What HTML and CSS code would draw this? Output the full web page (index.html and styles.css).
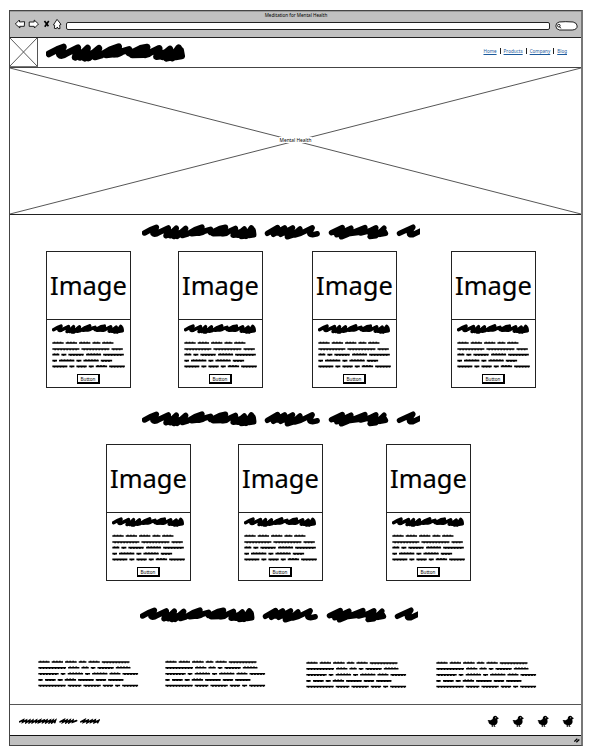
FILE: index.html
```html
<!DOCTYPE html>
<html lang="en">
<head>
<meta charset="utf-8">
<title>Meditation for Mental Health</title>
<link rel="stylesheet" href="styles.css">
</head>
<body>
<svg class="defs" aria-hidden="true">
  <symbol id="word" viewBox="138 128 415 56" preserveAspectRatio="none">
    <path class="brush" d="M147 160 L172 147 190 140 178 162 Q184 169 200 158 L233 142 225 170 L240 164 262 143 254 173 L272 164 296 144 284 169 L302 164 330 148 355 139 340 160 Q350 164 366 153 L386 147 Q380 164 396 156 L420 144 440 140 428 162 Q440 165 450 156 L476 144 468 168 L484 166 508 146 498 173 L514 170 534 142 525 169 L543 166 540 150"/>
    <path class="brush" d="M234 150 L240 170 258 155 265 172 290 153 M230 160H290 M470 158H540 M318 163L342 160 M396 163L430 162 M474 150 L486 168 506 155 515 172 530 155"/>
  </symbol>
  <symbol id="title" viewBox="36 42 834 46" preserveAspectRatio="none">
    <use href="#word" x="36" y="42" width="344" height="45"/>
    <path class="brush title-brush" d="M412 69 L443 52 430 72 464 53 452 72 488 53 472 79 L488 74 510 56 494 74 L512 69 547 53 540 66 Q536 73 547 73 L562 70 M428 68H510"/>
    <path class="brush title-brush" d="M604 67 L637 52 620 73 663 54 634 79 L658 70 L705 52 692 68 718 62 738 53 720 78 L738 76 762 54 750 72 767 69 M615 67H665 M655 70 L690 66 M718 66 L764 65"/>
    <path class="brush title-brush" d="M808 69 L849 51 838 67 Q836 75 848 73 L878 59"/>
  </symbol>
  <symbol id="copy" viewBox="35 287 220 84" preserveAspectRatio="none">
    <path class="ink" d="M36 293H70M76 293H110M116 293H150M156 293H180M185 293H219M36 311H117M123 311H207M213 311H247M36 328H57M63 328H78M84 328H130M137 328H182M188 328H250M36 346H50M56 346H102M108 346H123M129 346H175M181 346H215M36 363H81M87 363H102M108 363H139M145 363H160M166 363H200M206 363H253"/>
    <path class="wiggle" d="M40 291H67M80 291H107M120 291H148M160 291H178M189 291H216M42 313H114M129 313H204M217 313H245M40 326H55M67 330H76M89 330H127M141 326H180M193 330H247M40 348H48M61 344H99M112 348H121M134 344H172M185 348H212M40 365H78M91 365H100M112 365H136M149 365H158M170 361H197M211 365H250"/>
  </symbol>
  <symbol id="blurb" viewBox="114 29 301 82" preserveAspectRatio="none">
    <path class="ink" d="M115 35H149M155 35H189M195 35H230M236 35H259M265 35H299M305 35H388M115 52H198M204 52H238M244 52H266M272 52H286M292 52H341M347 52H391M115 70H176M182 70H196M203 70H249M255 70H270M276 70H322M328 70H361M367 70H414M115 88H128M135 88H167M173 88H188M194 88H228M234 88H281M287 88H318M324 88H370M115 105H197M203 105H244M250 105H302M308 105H339M345 105H360M366 105H414"/>
    <path class="wiggle" d="M119 33H147M159 33H187M199 33H227M240 33H257M269 33H296M310 37H385M119 54H195M208 50H235M248 50H263M276 54H284M297 54H337M351 50H388M120 72H173M186 72H194M208 68H246M259 72H268M281 68H319M332 68H358M372 72H411M119 90H126M139 90H164M177 90H186M199 86H225M239 90H278M291 90H315M329 90H367M119 107H194M208 107H241M255 107H298M312 107H336M349 107H358M371 107H411"/>
  </symbol>
  <symbol id="bird" viewBox="0 0 36 36">
    <path d="M1 15 L11 16 17 12 Q17 3 25 2 Q30 2 31 7 L36 10 31 13 Q34 28 23 31 L24 34 27 35 21 35 20 31 17 31 18 34 20 35 14 35 14 30 Q6 28 4 22 L6 21 2 18 4 17Z"/>
    <circle cx="26" cy="8" r="1.6" fill="#fff"/>
  </symbol>
</svg>

<div class="window">
  <div class="chrome">
    <div class="window-title">Meditation for Mental Health</div>
    <div class="toolbar">
      <svg class="controls" viewBox="45 54 142 36">
        <path class="outline" d="M46 72 L58 60 59 66 74 65 73 79 59 79 60 84Z M88 66 L103 66 103 60 116 72 104 84 103 79 88 79Z M161 75 L172 58 184 73 180 75 181 86 175 86 173 81 170 86 164 85 165 76Z"/>
        <path class="cross" d="M134 63 L146 79 M147 63 L135 80"/>
      </svg>
      <div class="address"></div>
      <svg class="search" viewBox="0 0 68 30">
        <path class="outline" d="M12 3 Q30 1 54 3 Q66 6 66 15 Q66 26 51 27 L13 27 Q2 25 2 15 Q2 5 12 3Z"/>
        <circle cx="11" cy="14" r="4" fill="none" stroke="#000" stroke-width="2.5"/>
        <path d="M13 17 L17 22" stroke="#000" stroke-width="3"/>
      </svg>
    </div>
  </div>

  <header class="header">
    <svg class="logo" viewBox="0 0 28 29" preserveAspectRatio="none"><path d="M0 0 L28 29 M28 0 L0 29"/></svg>
    <svg class="brand"><use href="#word"/></svg>
    <nav class="nav"><a href="#">Home</a><a href="#">Products</a><a href="#">Company</a><a href="#">Blog</a></nav>
  </header>

  <section class="hero">
    <svg class="hero-cross" viewBox="0 0 572 146" preserveAspectRatio="none"><path d="M0 0 L572 146 M572 0 L0 146"/></svg>
    <span class="hero-label">Mental Health</span>
  </section>

  <main class="main">
    <svg class="title"><use href="#title"/></svg>
    <div class="cards cards-four">
      <article class="card"><div class="picture">Image</div><svg class="card-title"><use href="#word"/></svg><svg class="card-copy"><use href="#copy"/></svg><button class="button">Button</button></article>
      <article class="card"><div class="picture">Image</div><svg class="card-title"><use href="#word"/></svg><svg class="card-copy"><use href="#copy"/></svg><button class="button">Button</button></article>
      <article class="card"><div class="picture">Image</div><svg class="card-title"><use href="#word"/></svg><svg class="card-copy"><use href="#copy"/></svg><button class="button">Button</button></article>
      <article class="card"><div class="picture">Image</div><svg class="card-title"><use href="#word"/></svg><svg class="card-copy"><use href="#copy"/></svg><button class="button">Button</button></article>
    </div>
    <svg class="title title-second"><use href="#title"/></svg>
    <div class="cards cards-three">
      <article class="card"><div class="picture">Image</div><svg class="card-title"><use href="#word"/></svg><svg class="card-copy"><use href="#copy"/></svg><button class="button">Button</button></article>
      <article class="card"><div class="picture">Image</div><svg class="card-title"><use href="#word"/></svg><svg class="card-copy"><use href="#copy"/></svg><button class="button">Button</button></article>
      <article class="card"><div class="picture">Image</div><svg class="card-title"><use href="#word"/></svg><svg class="card-copy"><use href="#copy"/></svg><button class="button">Button</button></article>
    </div>
    <svg class="title title-third"><use href="#title"/></svg>
    <div class="blurbs">
      <svg class="blurb"><use href="#blurb"/></svg>
      <svg class="blurb"><use href="#blurb"/></svg>
      <svg class="blurb"><use href="#blurb"/></svg>
      <svg class="blurb"><use href="#blurb"/></svg>
    </div>
  </main>

  <footer class="footer">
    <svg class="legal" viewBox="56 205 242 16" preserveAspectRatio="none">
      <path d="M58 215 L69 210 67 216 78 211 77 217 88 211 87 217 97 211 96 217 108 211 107 216 119 211 116 216 130 211 128 216 139 211 137 217 149 211 147 217 157 211 155 217 165 211 163 217 M78 214H163 M179 215 L190 210 187 216 199 211 197 217 208 211 206 217 217 211 216 216 228 212 M187 214H218 M241 215 L252 210 249 216 262 211 260 217 273 211 271 216 283 211 281 217 294 212 291 217 M250 214H292"/>
    </svg>
    <div class="social">
      <svg><use href="#bird"/></svg><svg><use href="#bird"/></svg><svg><use href="#bird"/></svg><svg><use href="#bird"/></svg>
    </div>
  </footer>
  <div class="status"><svg class="grip" viewBox="0 0 18 14"><path d="M1 10 L10 2 M7 12 L16 4"/></svg></div>
</div>
</body>
</html>
```
FILE: styles.css
```css
* { box-sizing: border-box; }
body { margin: 0; background: #fff; color: #000; font-family: "Noto Sans", sans-serif; font-size: 4.8px; line-height: 6px; }
svg { display: block; flex: none; }
.defs { position: absolute; width: 0; height: 0; }

.brush { fill: none; stroke: #000; stroke-width: 20; stroke-linecap: round; stroke-linejoin: round; }
.title-brush { stroke-width: 15.5; }
.ink { fill: none; stroke: #000; stroke-width: 5; }
.wiggle { fill: none; stroke: #000; stroke-width: 3; stroke-dasharray: 5 4; }
.outline { fill: #fff; stroke: #000; stroke-width: 2.6; stroke-linejoin: round; }
.cross { fill: none; stroke: #000; stroke-width: 5; }

.window { display: flex; flex-direction: column; width: 574px; height: 736px; margin: 10px 0 0 9px; border: 1px solid #444; border-right: 2px solid #777; }
.chrome { height: 27px; background: #c0c0c0; border-top: 1px solid #999; border-bottom: 1px solid #222; }
.window-title { height: 8px; padding-left: 1px; text-align: center; font-size: 4.6px; }
.toolbar { display: flex; align-items: flex-start; padding: 0 3px 0 5px; }
.controls { width: 47px; height: 12px; margin-top: -2px; }
.address { flex: 1; height: 8px; margin: 2px 5px 0 4px; background: #fff; border: 1px solid #222; border-radius: 2px; }
.search { width: 23px; height: 10px; margin-top: 1px; }

.header { display: flex; align-items: center; height: 30px; border-bottom: 1px solid #444; }
.logo { width: 28px; height: 29px; border-right: 1px solid #555; border-bottom: 1px solid #777; }
.logo path, .hero-cross path { fill: none; stroke: #555; stroke-width: 1; }
.brand { width: 139px; height: 19px; margin-left: 8px; }
.nav { display: flex; margin-left: auto; padding: 0 14px 3px 0; font-size: 4.6px; }
.nav a { color: #1c5a9c; }
.nav a + a { margin-left: 3px; padding-left: 3px; border-left: 1px solid #222; }

.hero { display: grid; place-items: center; height: 147px; border-bottom: 1px solid #222; }
.hero > * { grid-area: 1 / 1; }
.hero-cross { width: 571px; height: 146px; }
.hero-label { z-index: 1; margin-top: -2px; padding: 0 1px; background: #fff; }

.main { flex: 1; min-height: 0; }
.title { width: 278px; height: 16px; margin: 9px 0 0 132px; }
.title-second { margin-top: 23px; }
.title-third { margin: 26px 0 0 130px; }
.cards { display: grid; }
.cards-four { grid-template-columns: 132px 134px 139px 85px; margin: 11px 0 0 36px; }
.cards-three { grid-template-columns: 132px 148px 85px; margin: 17px 0 0 96px; }
.card { display: flex; flex-direction: column; width: 85px; height: 137px; border: 1px solid #222; }
.picture { height: 68px; border-bottom: 1px solid #222; text-align: center; font-size: 25.5px; line-height: 66px; white-space: nowrap; -webkit-text-stroke: .2px #000; }
.card-title { width: 72px; height: 10px; margin: 4px 0 0 5px; }
.card-copy { width: 73.5px; height: 28px; margin: 7px 0 0 4.5px; }
.button { width: 23px; height: 10px; margin: 5px 0 0 30px; padding: 0; background: #fff; border: 1px solid #000; border-width: 1px 2px 2px 1px; font: 4.6px/6px "Noto Sans", sans-serif; }

.blurbs { display: grid; grid-template-columns: 127px 141px 130px 101px; margin: 37px 0 0 28px; }
.blurb { width: 100.5px; height: 27.5px; }
.blurb:nth-child(n+3) { margin-top: 1px; }

.footer { display: flex; align-items: center; height: 31px; padding: 2px 7px 0 9px; border-top: 1px solid #555; }
.legal { width: 81px; height: 6px; }
.legal path { fill: none; stroke: #000; stroke-width: 5; stroke-linecap: round; }
.social { display: flex; gap: 13px; margin-left: auto; }
.social svg { width: 12px; height: 12px; }
.status { display: flex; justify-content: flex-end; align-items: center; height: 10px; background: #c0c0c0; border-top: 1px solid #111; }
.grip { width: 6px; height: 5px; margin-right: 1px; }
.grip path { stroke: #000; stroke-width: 4; }
```
